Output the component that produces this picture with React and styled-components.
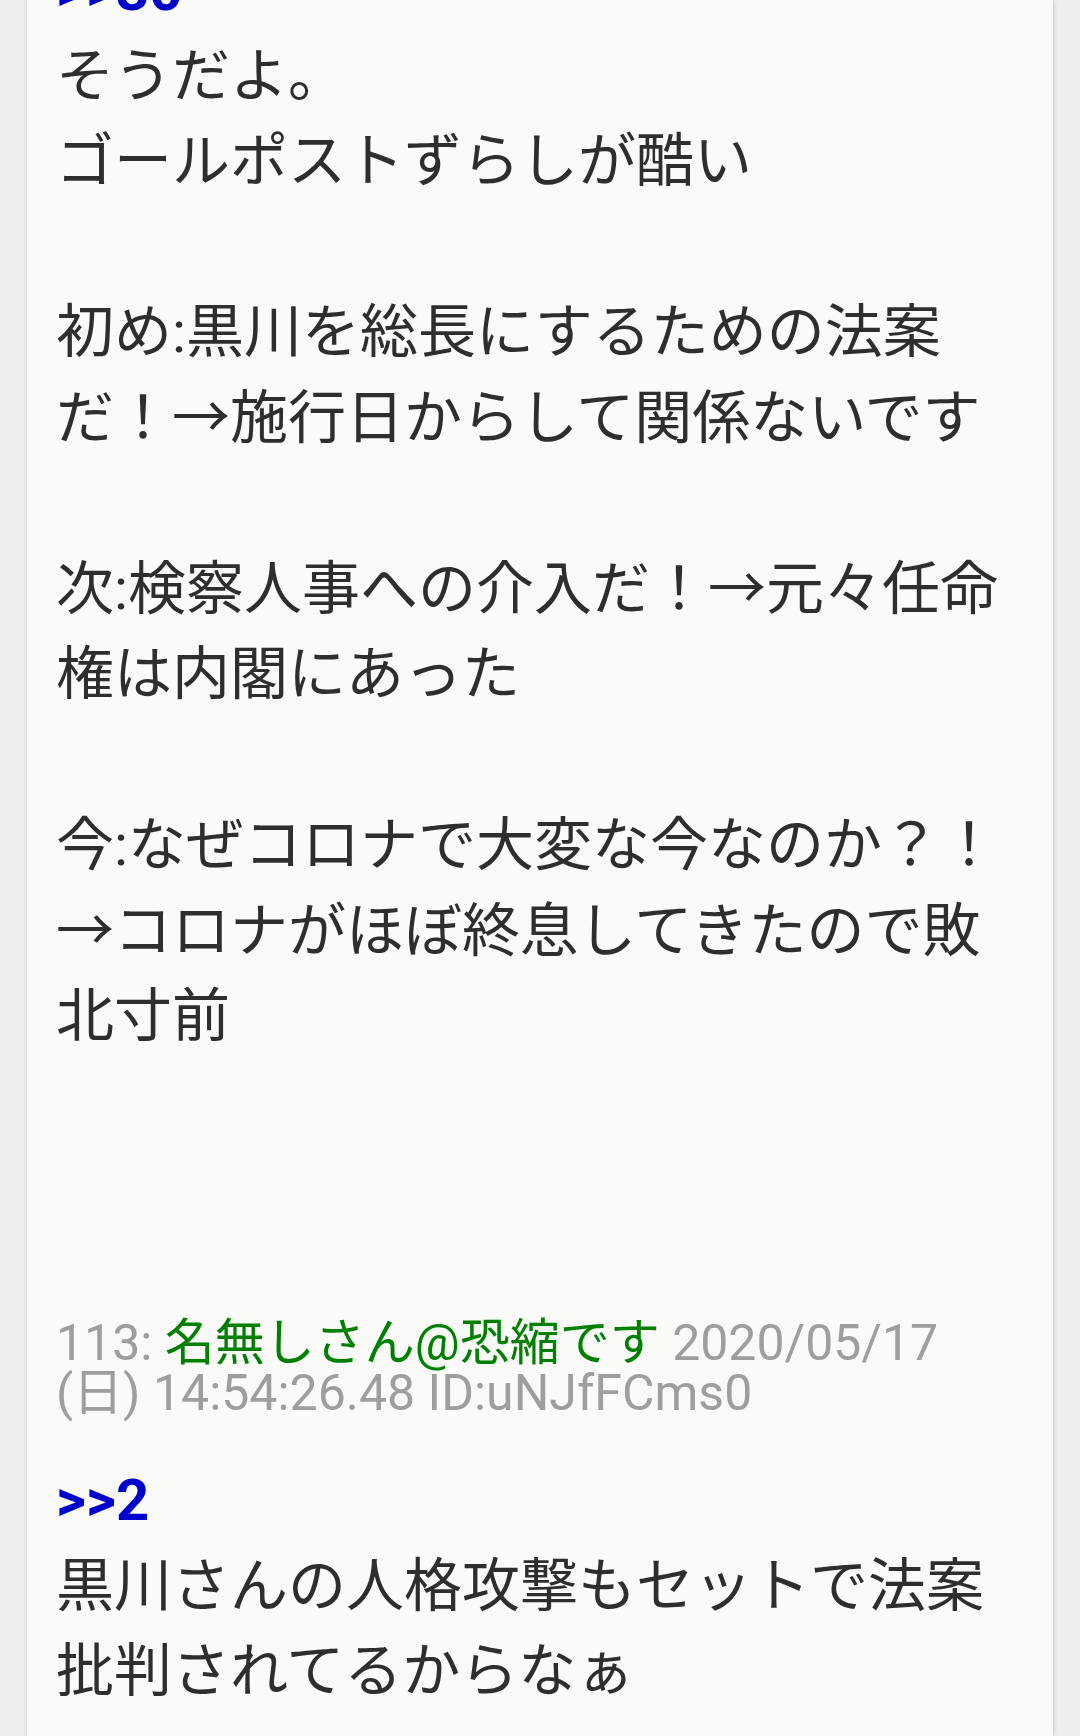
import React from 'react';
import styled, { createGlobalStyle } from 'styled-components';

const GlobalStyle = createGlobalStyle`
  html, body {
    margin: 0;
    padding: 0;
    background: #efeeec;
  }
  body {
    font-family: Roboto, "Noto Sans CJK JP", sans-serif;
    -webkit-font-smoothing: antialiased;
  }
`;

const posts = [
  {
    id: 112,
    hideHeader: true,
    anchor: '30',
    lines: [
      'そうだよ。',
      'ゴールポストずらしが酷い',
      '',
      '初め:黒川を総長にするための法案',
      'だ！→施行日からして関係ないです',
      '',
      '次:検察人事への介入だ！→元々任命',
      '権は内閣にあった',
      '',
      '今:なぜコロナで大変な今なのか？！',
      '→コロナがほぼ終息してきたので敗',
      '北寸前',
      '',
      '',
      '',
    ],
  },
  {
    id: 113,
    name: '名無しさん@恐縮です',
    date: '2020/05/17',
    week: '(日)',
    time: '14:54:26.48',
    uid: 'uNJfFCms0',
    anchor: '2',
    lines: ['黒川さんの人格攻撃もセットで法案', '批判されてるからなぁ'],
  },
];

function App() {
  return (
    <>
      <GlobalStyle />
      <Page>
        <Card>
          <List>
            {posts.map((p) => (
              <Post key={p.id}>
                {!p.hideHeader && (
                  <Header>
                    {p.id}: <Name>{p.name}</Name> {p.date} {p.week} {p.time} ID:{p.uid}
                  </Header>
                )}
                <Body>
                  <Anchor>&gt;&gt;{p.anchor}</Anchor>
                  <br />
                  {p.lines.map((l, i) => (
                    <React.Fragment key={i}>
                      {l}
                      <br />
                    </React.Fragment>
                  ))}
                </Body>
              </Post>
            ))}
          </List>
        </Card>
      </Page>
    </>
  );
}

export default App;

const Page = styled.div`
  width: 1080px;
  height: 1736px;
  overflow: hidden;
  display: flex;
  justify-content: flex-start;
`;

const Card = styled.main`
  margin-left: 26px;
  width: 1027px;
  min-height: 100%;
  background: #fafaf9;
  border-left: 1px solid #e2e1df;
  box-shadow: 1px 0 4px rgba(0, 0, 0, 0.14);
  box-sizing: border-box;
  padding: 0 30px 0 29px;
`;

const List = styled.div`
  margin-top: -52px;
  display: flex;
  flex-direction: column;
`;

const Post = styled.article`
  display: flex;
  flex-direction: column;
`;

const Header = styled.div`
  font-size: 50px;
  line-height: 50px;
  color: #9e9e9e;
  margin-top: 2px;
  margin-bottom: 40px;
`;

const Name = styled.span`
  color: #008000;
`;

const Body = styled.div`
  font-size: 58px;
  line-height: 85.5px;
  color: #2e2e2e;
  white-space: nowrap;
`;

const Anchor = styled.span`
  color: #0000cc;
  font-weight: 700;
`;
